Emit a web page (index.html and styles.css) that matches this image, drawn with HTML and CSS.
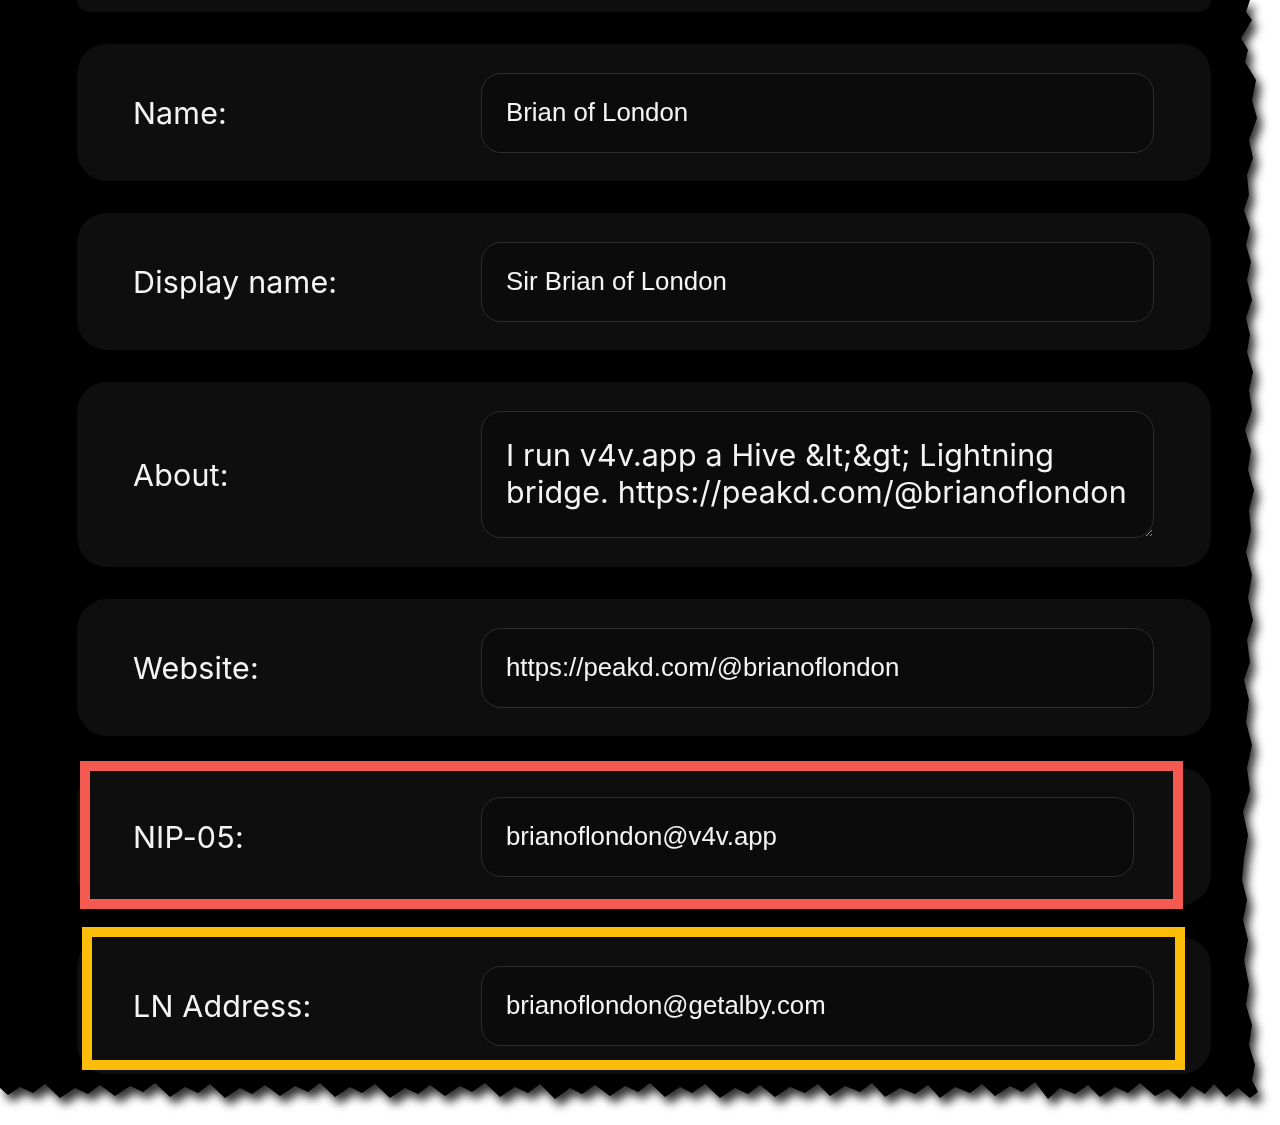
FILE: index.html
```html
<!DOCTYPE html>
<html lang="en">
<head>
<meta charset="utf-8">
<title>Profile</title>
<link rel="stylesheet" href="styles.css">
</head>
<body>
<div class="sheet">
  <div class="paper">
    <div class="form">
      <div class="card cut"></div>
      <div class="card">
        <label class="label">Name:</label>
        <input class="field" type="text" value="Brian of London">
      </div>
      <div class="card">
        <label class="label">Display name:</label>
        <input class="field" type="text" value="Sir Brian of London">
      </div>
      <div class="card tall">
        <label class="label">About:</label>
        <textarea class="field area">I run v4v.app a Hive &amp;lt;&amp;gt; Lightning bridge. https://peakd.com/@brianoflondon</textarea>
      </div>
      <div class="card">
        <label class="label">Website:</label>
        <input class="field" type="text" value="https://peakd.com/@brianoflondon">
      </div>
      <div class="card marked red">
        <label class="label">NIP-05:</label>
        <input class="field narrow" type="text" value="brianoflondon@v4v.app">
      </div>
      <div class="card marked yellow">
        <label class="label">LN Address:</label>
        <input class="field" type="text" value="brianoflondon@getalby.com">
      </div>
    </div>
  </div>
</div>
</body>
</html>
```
FILE: styles.css
```css
html, body {
  margin: 0;
  padding: 0;
  background: #ffffff;
}

.sheet {
  width: 1280px;
  height: 1125px;
  overflow: hidden;
  filter: drop-shadow(5px 7px 5px rgba(0, 0, 0, 0.8));
}

.paper {
  width: 1280px;
  height: 1125px;
  background: #000000;
  clip-path: polygon(
    0 0, 1250px 0, 1246px 12px, 1252px 20px, 1241px 38px, 1248px 50px, 1245px 62px, 1256px 80px,
    1252px 100px, 1257px 118px, 1249px 140px, 1253px 158px, 1247px 175px, 1249px 195px, 1244px 210px,
    1250px 228px, 1246px 245px, 1251px 262px, 1247px 280px, 1252px 300px, 1246px 318px, 1250px 335px,
    1247px 352px, 1253px 372px, 1249px 390px, 1252px 410px, 1245px 430px, 1251px 450px, 1248px 470px,
    1254px 490px, 1249px 510px, 1251px 530px, 1246px 552px, 1252px 575px, 1248px 598px, 1253px 620px,
    1247px 640px, 1250px 662px, 1244px 680px, 1249px 700px, 1246px 722px, 1252px 745px, 1247px 768px,
    1250px 790px, 1243px 812px, 1248px 835px, 1244px 858px, 1242px 880px, 1247px 900px, 1243px 920px,
    1248px 940px, 1244px 960px, 1249px 985px, 1246px 1005px, 1252px 1025px, 1249px 1045px,
    1255px 1065px, 1252px 1080px, 1258px 1092px,
    1250px 1098px, 1238px 1088px, 1226px 1097px, 1214px 1084px, 1205px 1094px, 1192px 1086px,
    1180px 1099px, 1168px 1089px, 1155px 1096px, 1140px 1083px, 1128px 1093px, 1115px 1087px,
    1100px 1097px, 1088px 1085px, 1075px 1094px, 1060px 1088px, 1048px 1099px, 1035px 1082px,
    1022px 1092px, 1010px 1086px, 995px 1096px, 982px 1084px, 970px 1093px, 955px 1087px,
    940px 1098px, 928px 1085px, 915px 1094px, 900px 1088px, 885px 1097px, 872px 1083px,
    860px 1092px, 845px 1086px, 830px 1096px, 818px 1084px, 805px 1093px, 790px 1087px,
    775px 1097px, 760px 1085px, 748px 1094px, 735px 1088px, 720px 1098px, 705px 1084px,
    692px 1093px, 680px 1087px, 665px 1097px, 650px 1083px, 638px 1092px, 625px 1086px,
    610px 1096px, 595px 1085px, 582px 1094px, 570px 1088px, 555px 1099px, 540px 1084px,
    528px 1093px, 515px 1087px, 500px 1097px, 485px 1083px, 472px 1092px, 460px 1086px,
    445px 1096px, 430px 1085px, 418px 1094px, 405px 1088px, 390px 1098px, 375px 1084px,
    362px 1093px, 350px 1087px, 335px 1097px, 320px 1083px, 308px 1092px, 295px 1086px,
    280px 1096px, 265px 1085px, 252px 1094px, 240px 1088px, 225px 1098px, 210px 1084px,
    198px 1093px, 185px 1087px, 170px 1097px, 155px 1083px, 143px 1092px, 130px 1086px,
    115px 1096px, 100px 1085px, 88px 1094px, 75px 1088px, 60px 1098px, 45px 1084px,
    33px 1093px, 20px 1087px, 8px 1095px, 0 1088px
  );
}

.form {
  width: 1134px;
  margin-left: 77px;
  display: flex;
  flex-direction: column;
  gap: 32px;
}

.card {
  position: relative;
  height: 137px;
  box-sizing: border-box;
  padding: 0 57px 0 56px;
  background: #0e0e0e;
  border-radius: 30px;
  display: flex;
  align-items: center;
}

.card.cut {
  height: 12px;
  border-radius: 0 0 30px 30px;
}

.card.tall {
  height: 185px;
}

.label {
  position: relative;
  z-index: 1;
  width: 348px;
  flex: none;
  font-family: Inter, "Noto Sans", sans-serif;
  font-size: 30.4px;
  color: #f4f4f4;
  letter-spacing: 0.2px;
}

.field {
  position: relative;
  z-index: 1;
  box-sizing: border-box;
  width: 673px;
  height: 80px;
  padding: 0 24px;
  background: #0b0b0b;
  border: 1.5px solid #2e2e2e;
  border-radius: 20px;
  color: #f4f4f4;
  font-family: "Liberation Sans", Arial, sans-serif;
  font-size: 25.8px;
  outline: none;
}

.field.narrow {
  width: 653px;
}

.field.area {
  height: 127px;
  padding: 25px 10px 20px 24px;
  font-family: Inter, "Noto Sans", sans-serif;
  font-size: 30.4px;
  line-height: 37px;
  letter-spacing: 0.2px;
  resize: vertical;
  color-scheme: dark;
  overflow: hidden;
}

.card.marked::after {
  content: "";
  position: absolute;
  left: 3px;
  right: 28px;
  box-sizing: border-box;
  border: 10px solid;
  background: #0e0e0e;
  z-index: 0;
}

.card.red::after {
  top: -7px;
  bottom: -4px;
  border-color: #f45a4f;
}

.card.yellow::after {
  left: 5px;
  right: 26px;
  top: -10px;
  bottom: 4px;
  border-color: #fbbd08;
}
```
